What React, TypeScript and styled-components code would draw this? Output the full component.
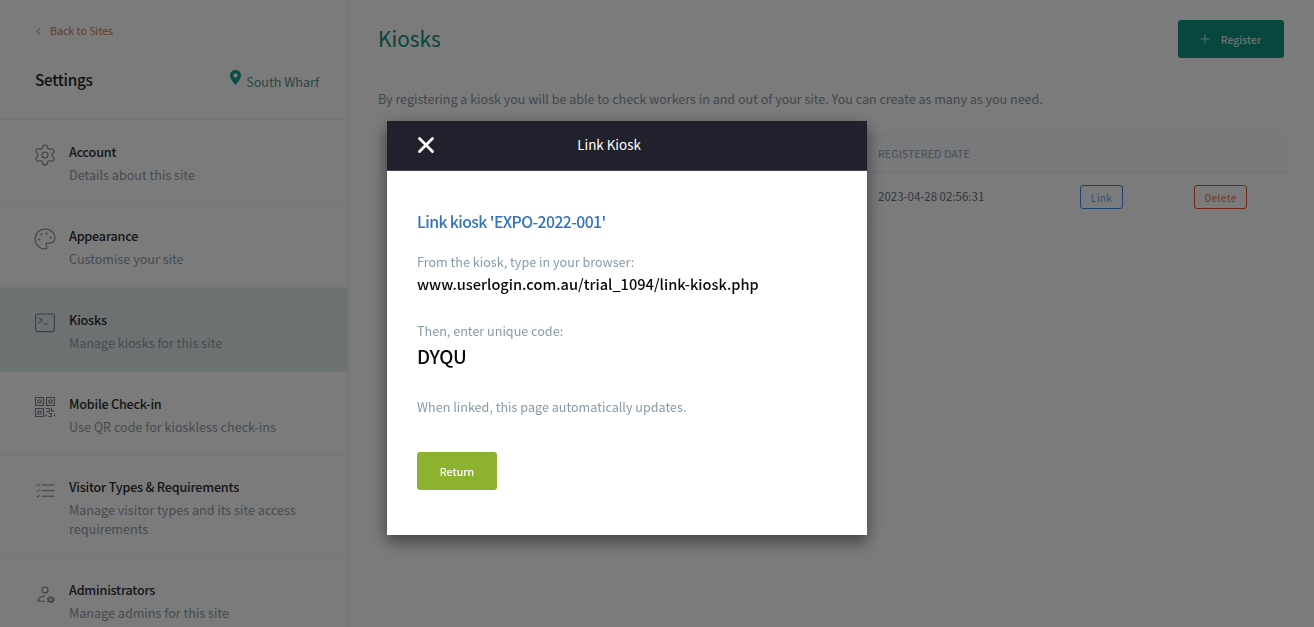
import React from 'react';
import styled, { createGlobalStyle } from 'styled-components';
import { ChevronLeft, Plus, Settings as Gear, Palette, X } from 'lucide-react';

const GlobalStyle = createGlobalStyle`
  html, body {
    margin: 0;
    height: 100%;
    overflow: hidden;
    background: #f6f6f6;
    font-family: "Noto Sans CJK SC", "Noto Sans", sans-serif;
  }
  * { box-sizing: border-box; }
`;

const Page = styled.div`
  display: flex;
  height: 627px;
  overflow: hidden;
`;

const Sidebar = styled.aside`
  flex: 0 0 349px;
  border-right: 2px solid #ebebeb;
  overflow: hidden;
`;

const SideHeader = styled.div`
  height: 120px;
  padding: 22px 28px 0 35px;
  border-bottom: 2px solid #ebebeb;
`;

const BackLink = styled.a`
  display: flex;
  align-items: center;
  gap: 6px;
  height: 18px;
  font-size: 10.6px;
  line-height: 18px;
  color: #d0764f;
  svg { color: #8a6a60; margin-left: -2px; }
`;

const TitleRow = styled.div`
  display: flex;
  justify-content: space-between;
  align-items: center;
  margin-top: 20px;
`;

const SideTitle = styled.h1`
  margin: 0;
  font-size: 15.3px;
  line-height: 38px;
  font-weight: 500;
  color: #1f1f1f;
  letter-spacing: -0.25px;
`;

const SiteName = styled.div`
  display: flex;
  align-items: center;
  gap: 5px;
  padding-top: 4px;
  font-size: 12.6px;
  color: #4f8f86;
  svg { margin-top: -8px; }
`;

const NavItem = styled.div<{ $active?: boolean; $tall?: boolean }>`
  display: flex;
  gap: 14px;
  height: ${p => (p.$tall ? 102 : 84)}px;
  padding: ${p => (p.$tall ? 21 : 22)}px 20px 0 35px;
  border-bottom: 1px solid #ececec;
  background: ${p => (p.$active ? '#d9e3e3' : 'transparent')};
`;

const NavIcon = styled.div<{ $tall?: boolean }>`
  flex: 0 0 20px;
  height: 20px;
  margin-top: ${p => (p.$tall ? 4 : 3)}px;
  color: #6f7f89;
  svg { display: block; }
`;

const LucideBox = styled.span`
  display: block;
  margin: -2px;
`;

const NavText = styled.div`
  display: flex;
  flex-direction: column;
`;

const NavTitle = styled.div`
  font-size: 12.6px;
  line-height: 20px;
  font-weight: 500;
  letter-spacing: -0.2px;
  color: #2a2c30;
`;

const NavDesc = styled.div`
  margin-top: 3px;
  font-size: 12.6px;
  line-height: 19px;
  color: #8a99a3;
`;

const Main = styled.main`
  flex: 1;
  padding: 20px 27px 0 29px;
`;

const MainHeader = styled.div`
  display: flex;
  justify-content: space-between;
  align-items: flex-start;
`;

const PageTitle = styled.h2`
  margin: 0;
  font-size: 20.8px;
  line-height: 36px;
  font-weight: 400;
  color: #0f8a78;
`;

const RegisterButton = styled.button`
  display: flex;
  align-items: center;
  justify-content: center;
  gap: 9px;
  width: 106px;
  height: 38px;
  margin-right: 3px;
  padding: 0 3px 0 0;
  border: 0;
  border-radius: 3px;
  background: #0f8f7f;
  color: #d8e6e4;
  font: 500 10.4px "Noto Sans CJK SC", sans-serif;
`;

const Intro = styled.p`
  margin: 31px 0 0;
  font-size: 12.54px;
  line-height: 20px;
  color: #84929c;
`;

const Table = styled.div`
  margin-top: 25px;
  border: 1px solid #eef1f4;
`;

const HeadRow = styled.div`
  display: grid;
  grid-template-columns: 499px 1fr;
  align-items: center;
  height: 38px;
  padding-bottom: 2px;
  background: #eef2f6;
  border-bottom: 1px solid #e3e8ef;
  font-size: 10.8px;
  color: #8f9ca8;
`;

const BodyRow = styled.div`
  display: grid;
  grid-template-columns: 499px 202px 114px 1fr;
  align-items: center;
  height: 48px;
  font-size: 11.5px;
  color: #667280;
`;

const DateCell = styled.span`
  padding-bottom: 2px;
`;

const OutlineButton = styled.button<{ $color: string; $text: string; $width: number }>`
  width: ${p => p.$width}px;
  height: 24px;
  padding: 0;
  border: 1px solid ${p => p.$color};
  border-radius: 3px;
  background: transparent;
  color: ${p => p.$text};
  font: 10px "Noto Sans CJK SC", sans-serif;
  letter-spacing: 0.4px;
`;

const Overlay = styled.div`
  position: fixed;
  inset: 0;
  background: rgba(0, 0, 0, 0.5);
  display: flex;
  align-items: flex-start;
  padding: 121px 0 0 387px;
`;

const Modal = styled.div`
  width: 480px;
  height: 414px;
  background: #fff;
  box-shadow: 0 6px 15px rgba(0, 0, 0, 0.5);
`;

const ModalBar = styled.div`
  position: relative;
  display: flex;
  align-items: center;
  justify-content: center;
  height: 50px;
  padding: 0 36px 4px 0;
  background: #20212c;
  border-bottom: 1px solid #444;
  color: #fff;
  font-size: 13.4px;
  font-weight: 400;
`;

const CloseIcon = styled.div`
  position: absolute;
  left: 26px;
  top: 11px;
  display: flex;
`;

const ModalBody = styled.div`
  padding: 40px 30px 0;
`;

const ModalHeading = styled.h3`
  margin: 0;
  font-size: 15.8px;
  line-height: 21px;
  font-weight: 500;
  letter-spacing: -0.6px;
  color: #3273bb;
`;

const Hint = styled.div<{ $top: number }>`
  margin-top: ${p => p.$top}px;
  font-size: 12.6px;
  line-height: 20px;
  color: #869ba9;
`;

const LinkText = styled.div`
  margin-top: 1px;
  font-size: 14.6px;
  line-height: 22px;
  font-weight: 500;
  color: #0a0a0a;
`;

const Code = styled.div`
  margin-top: 1px;
  font-size: 18.8px;
  line-height: 28px;
  font-weight: 500;
  letter-spacing: -0.3px;
  color: #0a0a0a;
`;

const ReturnButton = styled.button`
  display: block;
  width: 80px;
  height: 38px;
  margin-top: 35px;
  border: 0;
  border-radius: 3px;
  background: #8db32e;
  color: #fff;
  font: 500 10.6px "Noto Sans CJK SC", sans-serif;
`;

const line = { fill: 'none', stroke: 'currentColor', strokeWidth: 1.1, strokeLinecap: 'round' as const, strokeLinejoin: 'round' as const };

const PinIcon = () => (
  <svg width="11" height="15" viewBox="0 0 11 15">
    <path fillRule="evenodd" fill="#0f9a87" d="M5.5 0C2.4 0 0 2.4 0 5.4 0 9 5.5 15 5.5 15S11 9 11 5.4C11 2.4 8.6 0 5.5 0Zm0 7.6a2.2 2.2 0 1 1 0-4.4 2.2 2.2 0 0 1 0 4.4Z" />
  </svg>
);

const TerminalIcon = () => (
  <svg width="20" height="20" viewBox="0 0 20 20" {...line}>
    <rect x="0.6" y="1" width="18.8" height="17.6" rx="1.6" />
    <path d="M4 5l3.2 2.4L4 9.8M9 11h4" />
  </svg>
);

const QrIcon = () => (
  <svg width="20" height="20" viewBox="0 0 20 20" {...line} strokeLinecap="butt">
    <rect x="0.5" y="0.5" width="8" height="8" />
    <rect x="3" y="3" width="3" height="3" />
    <rect x="11.5" y="0.5" width="8" height="8" />
    <rect x="14" y="3" width="3" height="3" />
    <rect x="0.5" y="11.5" width="8" height="8" />
    <rect x="3" y="14" width="3" height="3" />
    <path d="M11 11.5h3.5v3h-3.5M16.5 11v3h3M11 17v2.6M13.5 16.5h3v3h-3M19.5 16.5v3" />
  </svg>
);

const ChecklistIcon = () => (
  <svg width="20" height="20" viewBox="0 0 20 20" {...line} strokeWidth="1">
    <path d="M7 4h12M7 9.7h12M7 15.2h12" />
    <path d="M1.8 4.2l1 .8 1.8-2M1.8 9.9l1 .8 1.8-2M1.8 15.4l1 .8 1.8-2" />
  </svg>
);

const AdminIcon = () => (
  <svg width="20" height="20" viewBox="0 0 20 20" {...line}>
    <circle cx="10" cy="7" r="3" />
    <path d="M3 18.2c0-3 2.6-5 6.5-5M3 18.2h6.5" />
    <circle cx="15.7" cy="16.8" r="2" strokeWidth="1.2" />
    <circle cx="15.7" cy="16.8" r="3.3" strokeWidth="1.2" strokeDasharray="1.5 1.1" strokeLinecap="butt" />
  </svg>
);

const icon = { size: 24, strokeWidth: 1.05 };

const App = () => (
  <>
    <GlobalStyle />
    <Page>
      <Sidebar>
        <SideHeader>
          <BackLink>
            <ChevronLeft size={11} strokeWidth={2} />
            Back to Sites
          </BackLink>
          <TitleRow>
            <SideTitle>Settings</SideTitle>
            <SiteName>
              <PinIcon />
              South Wharf
            </SiteName>
          </TitleRow>
        </SideHeader>
        <NavItem>
          <NavIcon><LucideBox><Gear {...icon} /></LucideBox></NavIcon>
          <NavText><NavTitle>Account</NavTitle><NavDesc>Details about this site</NavDesc></NavText>
        </NavItem>
        <NavItem>
          <NavIcon><LucideBox><Palette {...icon} /></LucideBox></NavIcon>
          <NavText><NavTitle>Appearance</NavTitle><NavDesc>Customise your site</NavDesc></NavText>
        </NavItem>
        <NavItem $active>
          <NavIcon><TerminalIcon /></NavIcon>
          <NavText><NavTitle>Kiosks</NavTitle><NavDesc>Manage kiosks for this site</NavDesc></NavText>
        </NavItem>
        <NavItem>
          <NavIcon><QrIcon /></NavIcon>
          <NavText><NavTitle>Mobile Check-in</NavTitle><NavDesc>Use QR code for kioskless check-ins</NavDesc></NavText>
        </NavItem>
        <NavItem $tall>
          <NavIcon $tall><ChecklistIcon /></NavIcon>
          <NavText>
            <NavTitle>Visitor Types &amp; Requirements</NavTitle>
            <NavDesc>Manage visitor types and its site access requirements</NavDesc>
          </NavText>
        </NavItem>
        <NavItem>
          <NavIcon><AdminIcon /></NavIcon>
          <NavText><NavTitle>Administrators</NavTitle><NavDesc>Manage admins for this site</NavDesc></NavText>
        </NavItem>
      </Sidebar>
      <Main>
        <MainHeader>
          <PageTitle>Kiosks</PageTitle>
          <RegisterButton><Plus size={14} strokeWidth={1.5} /> Register</RegisterButton>
        </MainHeader>
        <Intro>By registering a kiosk you will be able to check workers in and out of your site. You can create as many as you need.</Intro>
        <Table>
          <HeadRow>
            <span />
            <span>REGISTERED DATE</span>
          </HeadRow>
          <BodyRow>
            <span />
            <DateCell>2023-04-28 02:56:31</DateCell>
            <span><OutlineButton $color="#2f8fe0" $text="#6f9fe0" $width={43}>Link</OutlineButton></span>
            <span><OutlineButton $color="#e04a2a" $text="#d9755c" $width={53}>Delete</OutlineButton></span>
          </BodyRow>
        </Table>
      </Main>
    </Page>
    <Overlay>
      <Modal>
        <ModalBar>
          <CloseIcon><X size={26} strokeWidth={2.6} color="#fff" /></CloseIcon>
          Link Kiosk
        </ModalBar>
        <ModalBody>
          <ModalHeading>Link kiosk 'EXPO-2022-001'</ModalHeading>
          <Hint $top={20}>From the kiosk, type in your browser:</Hint>
          <LinkText>www.userlogin.com.au/trial_1094/link-kiosk.php</LinkText>
          <Hint $top={26}>Then, enter unique code:</Hint>
          <Code>DYQU</Code>
          <Hint $top={27}>When linked, this page automatically updates.</Hint>
          <ReturnButton>Return</ReturnButton>
        </ModalBody>
      </Modal>
    </Overlay>
  </>
);

export default App;
